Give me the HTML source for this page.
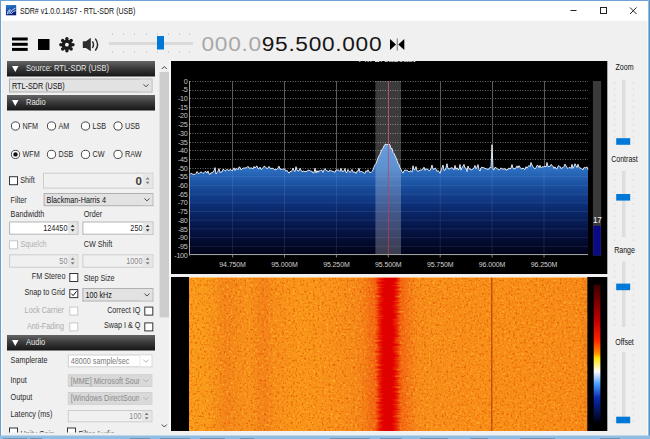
<!DOCTYPE html>
<html><head><meta charset="utf-8"><title>SDR#</title>
<style>html,body{margin:0;padding:0;width:650px;height:439px;overflow:hidden;background:#f0f0f0;font-family:"Liberation Sans", sans-serif;} svg{display:block}</style>
</head><body>
<svg width="650" height="439" viewBox="0 0 650 439" font-family='"Liberation Sans", sans-serif'><rect x="0" y="0" width="650" height="439" fill="#f0f0f0"/>
<rect x="0" y="0" width="650" height="20.8" fill="#ffffff"/>
<defs><linearGradient id="ig" x1="0" y1="0" x2="0.3" y2="1"><stop offset="0" stop-color="#2c86d8"/><stop offset="1" stop-color="#0a1f78"/></linearGradient></defs>
<rect x="5.9" y="5" width="10.3" height="10.3" fill="url(#ig)"/>
<path d="M7.3 14 Q7.8 9.8 10.2 9.6 Q10.4 12.2 7.6 13.8 M9.6 14 Q12 8.6 15.6 8.2 M11.2 13.8 Q13.6 10.8 15.6 10.6" stroke="#d8e6ff" stroke-width="0.9" fill="none"/>
<text transform="translate(20 13.7) scale(0.83 1)" font-size="8.5" fill="#111" letter-spacing="0" text-anchor="start" font-weight="normal" >SDR# v1.0.0.1457 - RTL-SDR (USB)</text>
<rect x="570.5" y="10" width="6" height="1" fill="#222"/>
<rect x="600.5" y="7.5" width="6" height="6" fill="none" stroke="#222" stroke-width="1"/>
<path d="M630 7.5 L636.5 14 M636.5 7.5 L630 14" stroke="#222" stroke-width="1"/>
<rect x="12" y="37.5" width="15.7" height="3" fill="#000"/>
<rect x="12" y="42.8" width="15.7" height="3" fill="#000"/>
<rect x="12" y="47.9" width="15.7" height="3" fill="#000"/>
<rect x="38" y="39" width="11.5" height="11" fill="#000"/>
<circle cx="72.90" cy="44.70" r="1.75" fill="#1a1a1a"/><circle cx="71.14" cy="48.94" r="1.75" fill="#1a1a1a"/><circle cx="66.90" cy="50.70" r="1.75" fill="#1a1a1a"/><circle cx="62.66" cy="48.94" r="1.75" fill="#1a1a1a"/><circle cx="60.90" cy="44.70" r="1.75" fill="#1a1a1a"/><circle cx="62.66" cy="40.46" r="1.75" fill="#1a1a1a"/><circle cx="66.90" cy="38.70" r="1.75" fill="#1a1a1a"/><circle cx="71.14" cy="40.46" r="1.75" fill="#1a1a1a"/>
<circle cx="66.9" cy="44.7" r="5.3" fill="#1a1a1a"/><circle cx="66.9" cy="44.7" r="1.9" fill="#f4f4f4"/>
<path d="M82.8 41.2 H86 L90.8 37.8 V51.2 L86 47.9 H82.8 Z" fill="#2e2e2e"/>
<path d="M92.4 41.3 Q94.6 44.6 92.4 47.9" stroke="#2e2e2e" stroke-width="1.5" fill="none"/>
<path d="M95.3 38.6 Q99.8 44.6 95.3 50.6" stroke="#2e2e2e" stroke-width="1.5" fill="none"/>
<rect x="109" y="42" width="84" height="3" fill="#dadada"/>
<rect x="112" y="33.5" width="1" height="1.5" fill="#c8c8c8"/><rect x="112" y="51.5" width="1" height="1.5" fill="#c8c8c8"/>
<rect x="123" y="33.5" width="1" height="1.5" fill="#c8c8c8"/><rect x="123" y="51.5" width="1" height="1.5" fill="#c8c8c8"/>
<rect x="134" y="33.5" width="1" height="1.5" fill="#c8c8c8"/><rect x="134" y="51.5" width="1" height="1.5" fill="#c8c8c8"/>
<rect x="146" y="33.5" width="1" height="1.5" fill="#c8c8c8"/><rect x="146" y="51.5" width="1" height="1.5" fill="#c8c8c8"/>
<rect x="157" y="33.5" width="1" height="1.5" fill="#c8c8c8"/><rect x="157" y="51.5" width="1" height="1.5" fill="#c8c8c8"/>
<rect x="168" y="33.5" width="1" height="1.5" fill="#c8c8c8"/><rect x="168" y="51.5" width="1" height="1.5" fill="#c8c8c8"/>
<rect x="179" y="33.5" width="1" height="1.5" fill="#c8c8c8"/><rect x="179" y="51.5" width="1" height="1.5" fill="#c8c8c8"/>
<rect x="189" y="33.5" width="1" height="1.5" fill="#c8c8c8"/><rect x="189" y="51.5" width="1" height="1.5" fill="#c8c8c8"/>
<rect x="157" y="36" width="7" height="13.5" fill="#0078d7"/>
<text transform="translate(201.5 50.8) scale(1.16 1)" x="0" y="0" font-size="19.6" letter-spacing="0.58" fill="#a8a8a8">000.0<tspan fill="#161616">95.500.000</tspan></text>
<path d="M390 39 L396 44.5 L390 50 Z M404.3 39 L398.3 44.5 L404.3 50 Z" fill="#000"/>
<rect x="396.8" y="38.5" width="0.8" height="12" fill="#555"/>
<defs><linearGradient id="hg" x1="0" y1="0" x2="0" y2="1"><stop offset="0" stop-color="#646464"/><stop offset="0.45" stop-color="#3c3c3c"/><stop offset="1" stop-color="#161616"/></linearGradient></defs>
<rect x="7" y="61" width="148" height="15.5" fill="url(#hg)"/>
<path d="M12 66 H18.5 L15.25 72 Z" fill="#fff"/>
<text transform="translate(26 71.3) scale(0.81 1)" font-size="9.3" fill="#e6e6e6" letter-spacing="0" text-anchor="start" font-weight="normal" >Source: RTL-SDR (USB)</text>
<rect x="7" y="95" width="148" height="15.5" fill="url(#hg)"/>
<path d="M12 100 H18.5 L15.25 106 Z" fill="#fff"/>
<text transform="translate(26 105.3) scale(0.81 1)" font-size="9.3" fill="#e6e6e6" letter-spacing="0" text-anchor="start" font-weight="normal" >Radio</text>
<rect x="7" y="335" width="148" height="15.5" fill="url(#hg)"/>
<path d="M12 340 H18.5 L15.25 346 Z" fill="#fff"/>
<text transform="translate(26 345.3) scale(0.81 1)" font-size="9.3" fill="#e6e6e6" letter-spacing="0" text-anchor="start" font-weight="normal" >Audio</text>
<rect x="9.5" y="79.0" width="142.5" height="13" fill="#e2e2e2" stroke="#b0b0b0" stroke-width="1"/>
<text transform="translate(12 88.5) scale(0.85 1)" font-size="8.5" fill="#111" letter-spacing="0" text-anchor="start" font-weight="normal" >RTL-SDR (USB)</text>
<rect x="139.5" y="79.5" width="12" height="12" fill="#e2e2e2"/>
<path d="M143.5 84.3 L146.0 86.8 L148.5 84.3" stroke="#333" stroke-width="0.9" fill="none"/>
<circle cx="15.5" cy="126" r="4.1" fill="#fff" stroke="#333" stroke-width="0.9"/>
<text transform="translate(22.5 129) scale(0.85 1)" font-size="8.5" fill="#2a2a2a" letter-spacing="0" text-anchor="start" font-weight="normal" >NFM</text>
<circle cx="51.5" cy="126" r="4.1" fill="#fff" stroke="#333" stroke-width="0.9"/>
<text transform="translate(58.5 129) scale(0.85 1)" font-size="8.5" fill="#2a2a2a" letter-spacing="0" text-anchor="start" font-weight="normal" >AM</text>
<circle cx="85.5" cy="126" r="4.1" fill="#fff" stroke="#333" stroke-width="0.9"/>
<text transform="translate(92.5 129) scale(0.85 1)" font-size="8.5" fill="#2a2a2a" letter-spacing="0" text-anchor="start" font-weight="normal" >LSB</text>
<circle cx="118.0" cy="126" r="4.1" fill="#fff" stroke="#333" stroke-width="0.9"/>
<text transform="translate(125.0 129) scale(0.85 1)" font-size="8.5" fill="#2a2a2a" letter-spacing="0" text-anchor="start" font-weight="normal" >USB</text>
<circle cx="15.5" cy="154.4" r="4.1" fill="#fff" stroke="#333" stroke-width="0.9"/>
<circle cx="15.5" cy="154.4" r="2.2" fill="#111"/>
<text transform="translate(22.5 157.4) scale(0.85 1)" font-size="8.5" fill="#2a2a2a" letter-spacing="0" text-anchor="start" font-weight="normal" >WFM</text>
<circle cx="51.5" cy="154.4" r="4.1" fill="#fff" stroke="#333" stroke-width="0.9"/>
<text transform="translate(58.5 157.4) scale(0.85 1)" font-size="8.5" fill="#2a2a2a" letter-spacing="0" text-anchor="start" font-weight="normal" >DSB</text>
<circle cx="85.5" cy="154.4" r="4.1" fill="#fff" stroke="#333" stroke-width="0.9"/>
<text transform="translate(92.5 157.4) scale(0.85 1)" font-size="8.5" fill="#2a2a2a" letter-spacing="0" text-anchor="start" font-weight="normal" >CW</text>
<circle cx="118.0" cy="154.4" r="4.1" fill="#fff" stroke="#333" stroke-width="0.9"/>
<text transform="translate(125.0 157.4) scale(0.85 1)" font-size="8.5" fill="#2a2a2a" letter-spacing="0" text-anchor="start" font-weight="normal" >RAW</text>
<rect x="9.5" y="176.7" width="8" height="8" fill="#fff" stroke="#333" stroke-width="1"/>
<text transform="translate(20.3 183.1) scale(0.85 1)" font-size="8.5" fill="#2a2a2a" letter-spacing="0" text-anchor="start" font-weight="normal" >Shift</text>
<rect x="43.5" y="173.2" width="109.4" height="14.9" fill="#f0f0f0" stroke="#cccccc" stroke-width="1"/>
<rect x="142.9" y="173.7" width="9.5" height="13.9" fill="#e6e6e6"/>
<path d="M145.75 179.45 L147.65 177.24999999999997 L149.55 179.45 Z M145.75 181.84999999999997 L147.65 184.04999999999998 L149.55 181.84999999999997 Z" fill="#777"/>
<text transform="translate(142 184.74999999999997) scale(1.05 1)" font-size="11" fill="#3c3c3c" letter-spacing="0" text-anchor="end" font-weight="bold" >0</text>
<text transform="translate(10.6 203.2) scale(0.85 1)" font-size="8.5" fill="#2a2a2a" letter-spacing="0" text-anchor="start" font-weight="normal" >Filter</text>
<rect x="44.1" y="193.5" width="108.8" height="12.2" fill="#e2e2e2" stroke="#b0b0b0" stroke-width="1"/>
<text transform="translate(46.6 202.6) scale(0.85 1)" font-size="8.5" fill="#111" letter-spacing="0" text-anchor="start" font-weight="normal" >Blackman-Harris 4</text>
<rect x="140.4" y="194" width="12" height="11.2" fill="#e2e2e2"/>
<path d="M144.4 198.4 L146.9 200.9 L149.4 198.4" stroke="#333" stroke-width="0.9" fill="none"/>
<text transform="translate(10.6 217.4) scale(0.85 1)" font-size="8.5" fill="#2a2a2a" letter-spacing="0" text-anchor="start" font-weight="normal" >Bandwidth</text>
<text transform="translate(83.7 217.4) scale(0.85 1)" font-size="8.5" fill="#2a2a2a" letter-spacing="0" text-anchor="start" font-weight="normal" >Order</text>
<rect x="9.6" y="222.0" width="68.3" height="12.2" fill="#ffffff" stroke="#b4b4b4" stroke-width="1"/>
<rect x="67.89999999999999" y="222.5" width="9.5" height="11.2" fill="#e6e6e6"/>
<path d="M70.74999999999999 226.9 L72.64999999999999 224.7 L74.55 226.9 Z M70.74999999999999 229.29999999999998 L72.64999999999999 231.5 L74.55 229.29999999999998 Z" fill="#333"/>
<text transform="translate(67.39999999999999 231.29999999999998) scale(0.85 1)" font-size="8.5" fill="#1a1a1a" letter-spacing="0" text-anchor="end" font-weight="normal" >124450</text>
<rect x="82.9" y="222.0" width="70" height="12.2" fill="#ffffff" stroke="#b4b4b4" stroke-width="1"/>
<rect x="142.9" y="222.5" width="9.5" height="11.2" fill="#e6e6e6"/>
<path d="M145.75 226.9 L147.65 224.7 L149.55 226.9 Z M145.75 229.29999999999998 L147.65 231.5 L149.55 229.29999999999998 Z" fill="#333"/>
<text transform="translate(142.4 231.29999999999998) scale(0.85 1)" font-size="8.5" fill="#1a1a1a" letter-spacing="0" text-anchor="end" font-weight="normal" >250</text>
<rect x="9.5" y="240.8" width="8" height="8" fill="#fff" stroke="#c8c8c8" stroke-width="1"/>
<text transform="translate(20.5 247.4) scale(0.85 1)" font-size="8.5" fill="#b0b0b0" letter-spacing="0" text-anchor="start" font-weight="normal" >Squelch</text>
<text transform="translate(83.7 247.4) scale(0.85 1)" font-size="8.5" fill="#2a2a2a" letter-spacing="0" text-anchor="start" font-weight="normal" >CW Shift</text>
<rect x="9.6" y="254.8" width="68.3" height="12.4" fill="#f0f0f0" stroke="#cccccc" stroke-width="1"/>
<rect x="67.89999999999999" y="255.3" width="9.5" height="11.4" fill="#e6e6e6"/>
<path d="M70.74999999999999 259.8 L72.64999999999999 257.6 L74.55 259.8 Z M70.74999999999999 262.2 L72.64999999999999 264.4 L74.55 262.2 Z" fill="#777"/>
<text transform="translate(67.39999999999999 264.2) scale(0.85 1)" font-size="8.5" fill="#8a8a8a" letter-spacing="0" text-anchor="end" font-weight="normal" >50</text>
<rect x="82.9" y="254.8" width="70" height="12.4" fill="#f0f0f0" stroke="#cccccc" stroke-width="1"/>
<rect x="142.9" y="255.3" width="9.5" height="11.4" fill="#e6e6e6"/>
<path d="M145.75 259.8 L147.65 257.6 L149.55 259.8 Z M145.75 262.2 L147.65 264.4 L149.55 262.2 Z" fill="#777"/>
<text transform="translate(142.4 264.2) scale(0.85 1)" font-size="8.5" fill="#8a8a8a" letter-spacing="0" text-anchor="end" font-weight="normal" >1000</text>
<text transform="translate(65.4 279) scale(0.85 1)" font-size="8.5" fill="#2a2a2a" letter-spacing="0" text-anchor="end" font-weight="normal" >FM Stereo</text>
<rect x="69.8" y="273.5" width="8" height="8" fill="#fff" stroke="#333" stroke-width="1"/>
<text transform="translate(83.7 280.9) scale(0.85 1)" font-size="8.5" fill="#2a2a2a" letter-spacing="0" text-anchor="start" font-weight="normal" >Step Size</text>
<text transform="translate(64.9 295.4) scale(0.85 1)" font-size="8.5" fill="#2a2a2a" letter-spacing="0" text-anchor="end" font-weight="normal" >Snap to Grid</text>
<rect x="69.8" y="289.6" width="8" height="8" fill="#fff" stroke="#333" stroke-width="1"/>
<path d="M71.3 293.6 L73.1 295.6 L76.5 291.3" stroke="#111" stroke-width="1" fill="none"/>
<rect x="82.9" y="288.5" width="70" height="12.5" fill="#e2e2e2" stroke="#b0b0b0" stroke-width="1"/>
<text transform="translate(85.4 297.75) scale(0.85 1)" font-size="8.5" fill="#111" letter-spacing="0" text-anchor="start" font-weight="normal" >100 kHz</text>
<rect x="140.4" y="289" width="12" height="11.5" fill="#e2e2e2"/>
<path d="M144.4 293.55 L146.9 296.05 L149.4 293.55" stroke="#333" stroke-width="0.9" fill="none"/>
<text transform="translate(63.9 313.4) scale(0.85 1)" font-size="8.5" fill="#aaaaaa" letter-spacing="0" text-anchor="end" font-weight="normal" >Lock Carrier</text>
<rect x="69.8" y="307.1" width="8" height="8" fill="#fff" stroke="#c8c8c8" stroke-width="1"/>
<text transform="translate(140.4 312.9) scale(0.85 1)" font-size="8.5" fill="#2a2a2a" letter-spacing="0" text-anchor="end" font-weight="normal" >Correct IQ</text>
<rect x="144.8" y="307.1" width="8" height="8" fill="#fff" stroke="#333" stroke-width="1"/>
<text transform="translate(63.9 329) scale(0.85 1)" font-size="8.5" fill="#aaaaaa" letter-spacing="0" text-anchor="end" font-weight="normal" >Anti-Fading</text>
<rect x="69.8" y="322.9" width="8" height="8" fill="#fff" stroke="#c8c8c8" stroke-width="1"/>
<text transform="translate(140.4 328.3) scale(0.85 1)" font-size="8.5" fill="#2a2a2a" letter-spacing="0" text-anchor="end" font-weight="normal" >Swap I &amp; Q</text>
<rect x="144.8" y="322.9" width="8" height="8" fill="#fff" stroke="#333" stroke-width="1"/>
<text transform="translate(10.6 363) scale(0.85 1)" font-size="8.5" fill="#2a2a2a" letter-spacing="0" text-anchor="start" font-weight="normal" >Samplerate</text>
<rect x="68.3" y="355.0" width="83.6" height="11.8" fill="#ffffff" stroke="#d0d0d0" stroke-width="1"/>
<text transform="translate(70.8 363.9) scale(0.85 1)" font-size="8.5" fill="#7a7a7a" letter-spacing="0" text-anchor="start" font-weight="normal" >48000 sample/sec</text>
<rect x="139.39999999999998" y="355.5" width="12" height="10.8" fill="#ffffff"/>
<path d="M143.39999999999998 359.7 L145.89999999999998 362.2 L148.39999999999998 359.7" stroke="#aaa" stroke-width="0.9" fill="none"/>
<rect x="139.5" y="355.5" width="0.8" height="11" fill="#e4e4e4"/>
<text transform="translate(10.6 383) scale(0.85 1)" font-size="8.5" fill="#2a2a2a" letter-spacing="0" text-anchor="start" font-weight="normal" >Input</text>
<rect x="68.3" y="374.7" width="83.6" height="11.8" fill="#d9d9d9" stroke="#d0d0d0" stroke-width="1"/>
<text transform="translate(70.8 383.59999999999997) scale(0.85 1)" font-size="8.5" fill="#8a8a8a" letter-spacing="0" text-anchor="start" font-weight="normal" >[MME] Microsoft Soun</text>
<rect x="139.39999999999998" y="375.2" width="12" height="10.8" fill="#d9d9d9"/>
<path d="M143.39999999999998 379.4 L145.89999999999998 381.9 L148.39999999999998 379.4" stroke="#aaa" stroke-width="0.9" fill="none"/>
<text transform="translate(10.6 400.4) scale(0.85 1)" font-size="8.5" fill="#2a2a2a" letter-spacing="0" text-anchor="start" font-weight="normal" >Output</text>
<rect x="68.3" y="392.5" width="83.6" height="11.8" fill="#d9d9d9" stroke="#d0d0d0" stroke-width="1"/>
<text transform="translate(70.8 401.4) scale(0.85 1)" font-size="8.5" fill="#8a8a8a" letter-spacing="0" text-anchor="start" font-weight="normal" >[Windows DirectSoun</text>
<rect x="139.39999999999998" y="393" width="12" height="10.8" fill="#d9d9d9"/>
<path d="M143.39999999999998 397.2 L145.89999999999998 399.7 L148.39999999999998 397.2" stroke="#aaa" stroke-width="0.9" fill="none"/>
<text transform="translate(10.6 416.6) scale(0.85 1)" font-size="8.5" fill="#2a2a2a" letter-spacing="0" text-anchor="start" font-weight="normal" >Latency (ms)</text>
<rect x="68.3" y="410.5" width="83.6" height="11.3" fill="#f0f0f0" stroke="#cccccc" stroke-width="1"/>
<rect x="141.89999999999998" y="411" width="9.5" height="10.3" fill="#e6e6e6"/>
<path d="M144.74999999999997 414.95 L146.64999999999998 412.75 L148.54999999999998 414.95 Z M144.74999999999997 417.34999999999997 L146.64999999999998 419.54999999999995 L148.54999999999998 417.34999999999997 Z" fill="#777"/>
<text transform="translate(141.39999999999998 419.34999999999997) scale(0.85 1)" font-size="8.5" fill="#8a8a8a" letter-spacing="0" text-anchor="end" font-weight="normal" >100</text>
<rect x="9.5" y="428" width="8" height="8" fill="#fff" stroke="#333" stroke-width="1"/>
<text transform="translate(20.5 436.5) scale(0.85 1)" font-size="8.5" fill="#2a2a2a" letter-spacing="0" text-anchor="start" font-weight="normal" >Unity Gain</text>
<rect x="67.5" y="428" width="8" height="8" fill="#fff" stroke="#333" stroke-width="1"/>
<text transform="translate(78.5 436.5) scale(0.85 1)" font-size="8.5" fill="#2a2a2a" letter-spacing="0" text-anchor="start" font-weight="normal" >Filter Audio</text>
<rect x="1" y="432.5" width="169" height="4" fill="#f0f0f0"/>
<rect x="159.5" y="61" width="9.5" height="375" fill="#f0f0f0"/>
<rect x="159.5" y="72" width="9.5" height="245.4" fill="#cdcdcd"/>
<path d="M161.8 69 L164.3 66.5 L166.8 69" stroke="#444" stroke-width="1" fill="none"/>
<path d="M161.8 424.5 L164.3 427 L166.8 424.5" stroke="#444" stroke-width="1" fill="none"/>
<rect x="169.2" y="61" width="1.8" height="370" fill="#fafafa"/>
<rect x="171" y="61" width="436.29999999999995" height="213" fill="#000"/>
<defs><clipPath id="sclip"><rect x="171" y="61" width="436.3" height="213"/></clipPath></defs>
<g clip-path="url(#sclip)"><text transform="translate(358.6 62.1) scale(0.96 1)" font-size="9.5" fill="#e8e8e8">FM Broadcast</text></g>
<defs><linearGradient id="sg" gradientUnits="userSpaceOnUse" x1="0" y1="143" x2="0" y2="255"><stop offset="0.0000" stop-color="#3a80d2"/><stop offset="0.2232" stop-color="#2e70c2"/><stop offset="0.3750" stop-color="#1a50a0"/><stop offset="0.5536" stop-color="#0c2f78"/><stop offset="0.7321" stop-color="#06184e"/><stop offset="0.9107" stop-color="#02082a"/><stop offset="1.0000" stop-color="#010318"/></linearGradient></defs>
<line x1="190" y1="81.5" x2="588" y2="81.5" stroke="#6a6a6a" stroke-width="1" stroke-dasharray="1 1.5"/><line x1="190" y1="90.5" x2="588" y2="90.5" stroke="#6a6a6a" stroke-width="1" stroke-dasharray="1 1.5"/><line x1="190" y1="98.5" x2="588" y2="98.5" stroke="#6a6a6a" stroke-width="1" stroke-dasharray="1 1.5"/><line x1="190" y1="107.5" x2="588" y2="107.5" stroke="#6a6a6a" stroke-width="1" stroke-dasharray="1 1.5"/><line x1="190" y1="116.5" x2="588" y2="116.5" stroke="#6a6a6a" stroke-width="1" stroke-dasharray="1 1.5"/><line x1="190" y1="124.5" x2="588" y2="124.5" stroke="#6a6a6a" stroke-width="1" stroke-dasharray="1 1.5"/><line x1="190" y1="133.5" x2="588" y2="133.5" stroke="#6a6a6a" stroke-width="1" stroke-dasharray="1 1.5"/><line x1="190" y1="142.5" x2="588" y2="142.5" stroke="#6a6a6a" stroke-width="1" stroke-dasharray="1 1.5"/><line x1="190" y1="150.5" x2="588" y2="150.5" stroke="#6a6a6a" stroke-width="1" stroke-dasharray="1 1.5"/><line x1="190" y1="159.5" x2="588" y2="159.5" stroke="#6a6a6a" stroke-width="1" stroke-dasharray="1 1.5"/><line x1="190" y1="168.5" x2="588" y2="168.5" stroke="#6a6a6a" stroke-width="1" stroke-dasharray="1 1.5"/><line x1="190" y1="177.5" x2="588" y2="177.5" stroke="#6a6a6a" stroke-width="1" stroke-dasharray="1 1.5"/><line x1="190" y1="185.5" x2="588" y2="185.5" stroke="#6a6a6a" stroke-width="1" stroke-dasharray="1 1.5"/><line x1="190" y1="194.5" x2="588" y2="194.5" stroke="#6a6a6a" stroke-width="1" stroke-dasharray="1 1.5"/><line x1="190" y1="203.5" x2="588" y2="203.5" stroke="#6a6a6a" stroke-width="1" stroke-dasharray="1 1.5"/><line x1="190" y1="211.5" x2="588" y2="211.5" stroke="#6a6a6a" stroke-width="1" stroke-dasharray="1 1.5"/><line x1="190" y1="220.5" x2="588" y2="220.5" stroke="#6a6a6a" stroke-width="1" stroke-dasharray="1 1.5"/><line x1="190" y1="229.5" x2="588" y2="229.5" stroke="#6a6a6a" stroke-width="1" stroke-dasharray="1 1.5"/><line x1="190" y1="237.5" x2="588" y2="237.5" stroke="#6a6a6a" stroke-width="1" stroke-dasharray="1 1.5"/><line x1="190" y1="246.5" x2="588" y2="246.5" stroke="#6a6a6a" stroke-width="1" stroke-dasharray="1 1.5"/><line x1="232.5" y1="81" x2="232.5" y2="255" stroke="#5a5a5a" stroke-width="1"/><line x1="284.5" y1="81" x2="284.5" y2="255" stroke="#5a5a5a" stroke-width="1"/><line x1="336.5" y1="81" x2="336.5" y2="255" stroke="#5a5a5a" stroke-width="1"/><line x1="388.5" y1="81" x2="388.5" y2="255" stroke="#5a5a5a" stroke-width="1"/><line x1="440.5" y1="81" x2="440.5" y2="255" stroke="#5a5a5a" stroke-width="1"/><line x1="492.5" y1="81" x2="492.5" y2="255" stroke="#5a5a5a" stroke-width="1"/><line x1="544.5" y1="81" x2="544.5" y2="255" stroke="#5a5a5a" stroke-width="1"/>
<polygon points="190,255 190.0,174.30 191.0,173.24 192.0,173.68 193.0,174.49 194.0,174.15 195.0,174.49 196.0,173.44 197.0,171.54 198.0,173.00 199.0,173.73 200.0,172.45 201.0,172.10 202.0,172.33 203.0,173.48 204.0,172.76 205.0,171.53 206.0,171.52 207.0,173.10 208.0,170.97 209.0,174.04 210.0,174.33 211.0,172.66 212.0,173.11 213.0,171.69 214.0,171.15 215.0,167.62 216.0,174.10 217.0,172.67 218.0,171.30 219.0,168.58 220.0,172.51 221.0,171.85 222.0,171.92 223.0,169.25 224.0,169.58 225.0,170.87 226.0,170.60 227.0,169.19 228.0,170.38 229.0,170.29 230.0,169.76 231.0,169.62 232.0,170.95 233.0,169.87 234.0,167.85 235.0,170.48 236.0,168.80 237.0,168.65 238.0,169.69 239.0,166.95 240.0,167.26 241.0,169.80 242.0,169.02 243.0,167.90 244.0,168.47 245.0,167.69 246.0,168.10 247.0,167.47 248.0,166.25 249.0,168.23 250.0,167.95 251.0,168.28 252.0,167.80 253.0,168.97 254.0,166.42 255.0,168.03 256.0,166.63 257.0,165.92 258.0,168.55 259.0,168.86 260.0,167.07 261.0,169.48 262.0,168.78 263.0,167.85 264.0,166.26 265.0,166.45 266.0,167.86 267.0,168.36 268.0,168.33 269.0,166.42 270.0,168.04 271.0,168.73 272.0,168.08 273.0,168.49 274.0,168.87 275.0,170.05 276.0,169.30 277.0,169.50 278.0,168.01 279.0,166.13 280.0,169.18 281.0,168.79 282.0,169.77 283.0,168.71 284.0,169.48 285.0,169.33 286.0,171.29 287.0,170.26 288.0,171.99 289.0,173.21 290.0,171.49 291.0,171.58 292.0,170.68 293.0,168.03 294.0,170.72 295.0,171.67 296.0,166.71 297.0,170.12 298.0,170.78 299.0,171.08 300.0,168.27 301.0,169.98 302.0,171.79 303.0,171.31 304.0,170.83 305.0,172.00 306.0,170.94 307.0,171.70 308.0,170.07 309.0,170.26 310.0,170.65 311.0,171.43 312.0,171.15 313.0,173.05 314.0,172.78 315.0,168.17 316.0,172.99 317.0,170.60 318.0,172.36 319.0,170.54 320.0,171.38 321.0,170.16 322.0,170.27 323.0,172.35 324.0,169.87 325.0,168.62 326.0,170.22 327.0,171.01 328.0,170.95 329.0,171.82 330.0,169.82 331.0,170.88 332.0,170.94 333.0,171.59 334.0,171.68 335.0,172.35 336.0,169.79 337.0,170.43 338.0,169.73 339.0,170.39 340.0,171.54 341.0,168.36 342.0,171.56 343.0,171.04 344.0,171.28 345.0,168.43 346.0,172.56 347.0,172.35 348.0,169.44 349.0,171.14 350.0,172.46 351.0,171.09 352.0,169.43 353.0,172.24 354.0,171.96 355.0,172.01 356.0,173.46 357.0,171.15 358.0,171.11 359.0,168.29 360.0,172.25 361.0,171.26 362.0,171.96 363.0,171.93 364.0,172.90 365.0,173.42 366.0,170.67 367.0,171.82 368.0,169.77 369.0,171.77 370.0,172.38 371.0,172.65 372.0,171.45 373.0,169.95 374.0,166.91 375.0,164.75 376.0,163.45 377.0,161.08 378.0,158.11 379.0,155.91 380.0,154.37 381.0,151.54 382.0,149.41 383.0,148.55 384.0,145.93 385.0,144.31 386.0,144.31 387.0,144.98 388.0,144.15 389.0,144.14 390.0,144.95 391.0,148.76 392.0,148.35 393.0,152.46 394.0,153.54 395.0,155.57 396.0,157.87 397.0,160.48 398.0,163.34 399.0,164.58 400.0,167.46 401.0,169.29 402.0,171.71 403.0,173.13 404.0,170.66 405.0,170.00 406.0,170.38 407.0,170.15 408.0,171.02 409.0,172.05 410.0,170.77 411.0,171.14 412.0,172.15 413.0,165.75 414.0,169.78 415.0,169.44 416.0,166.60 417.0,170.89 418.0,171.11 419.0,171.08 420.0,169.80 421.0,170.44 422.0,169.50 423.0,169.06 424.0,167.16 425.0,170.29 426.0,168.98 427.0,169.18 428.0,169.42 429.0,170.95 430.0,170.35 431.0,168.61 432.0,165.05 433.0,169.13 434.0,169.45 435.0,167.95 436.0,168.69 437.0,171.51 438.0,170.61 439.0,171.44 440.0,173.31 441.0,170.74 442.0,167.64 443.0,165.04 444.0,170.16 445.0,170.33 446.0,167.93 447.0,163.72 448.0,168.69 449.0,168.83 450.0,168.75 451.0,167.86 452.0,167.84 453.0,168.30 454.0,169.82 455.0,165.38 456.0,169.30 457.0,167.77 458.0,169.73 459.0,169.35 460.0,164.49 461.0,170.21 462.0,167.32 463.0,166.49 464.0,164.38 465.0,168.07 466.0,168.06 467.0,171.53 468.0,166.05 469.0,168.77 470.0,168.73 471.0,169.97 472.0,169.52 473.0,169.13 474.0,167.59 475.0,165.45 476.0,168.74 477.0,167.18 478.0,164.59 479.0,169.53 480.0,171.06 481.0,167.84 482.0,167.26 483.0,167.55 484.0,167.84 485.0,168.56 486.0,168.65 487.0,169.13 488.0,169.25 489.0,168.95 490.0,167.23 491.0,167.75 492.0,144.68 493.0,169.57 494.0,169.82 495.0,167.35 496.0,167.72 497.0,168.60 498.0,169.20 499.0,170.18 500.0,169.29 501.0,167.84 502.0,168.87 503.0,169.13 504.0,169.03 505.0,168.63 506.0,170.37 507.0,169.45 508.0,169.60 509.0,167.86 510.0,169.02 511.0,168.09 512.0,164.60 513.0,168.15 514.0,169.10 515.0,168.28 516.0,168.15 517.0,165.88 518.0,167.97 519.0,165.66 520.0,167.55 521.0,168.28 522.0,169.14 523.0,167.88 524.0,169.06 525.0,169.43 526.0,166.67 527.0,168.16 528.0,166.70 529.0,165.42 530.0,166.61 531.0,162.50 532.0,164.98 533.0,166.79 534.0,167.98 535.0,168.92 536.0,167.60 537.0,165.44 538.0,165.44 539.0,167.70 540.0,165.39 541.0,167.81 542.0,166.75 543.0,166.98 544.0,166.66 545.0,166.39 546.0,166.99 547.0,162.47 548.0,166.50 549.0,166.72 550.0,166.16 551.0,164.41 552.0,165.31 553.0,166.37 554.0,168.50 555.0,166.84 556.0,168.67 557.0,168.94 558.0,166.24 559.0,165.58 560.0,166.60 561.0,168.67 562.0,167.78 563.0,167.66 564.0,166.34 565.0,164.09 566.0,165.78 567.0,167.68 568.0,168.52 569.0,167.47 570.0,167.24 571.0,168.41 572.0,164.35 573.0,168.40 574.0,166.42 575.0,163.71 576.0,165.74 577.0,167.52 578.0,164.21 579.0,167.47 580.0,168.05 581.0,168.16 582.0,169.27 583.0,169.84 584.0,167.48 585.0,167.81 586.0,167.78 587.0,166.82 588.0,169.63 588,255" fill="url(#sg)"/>
<line x1="190" y1="176.70" x2="588" y2="176.70" stroke="#ffffff" stroke-opacity="0.08" stroke-width="1"/><line x1="190" y1="185.40" x2="588" y2="185.40" stroke="#ffffff" stroke-opacity="0.08" stroke-width="1"/><line x1="190" y1="194.10" x2="588" y2="194.10" stroke="#ffffff" stroke-opacity="0.08" stroke-width="1"/><line x1="190" y1="202.80" x2="588" y2="202.80" stroke="#ffffff" stroke-opacity="0.08" stroke-width="1"/><line x1="190" y1="211.50" x2="588" y2="211.50" stroke="#ffffff" stroke-opacity="0.08" stroke-width="1"/><line x1="190" y1="220.20" x2="588" y2="220.20" stroke="#ffffff" stroke-opacity="0.08" stroke-width="1"/><line x1="190" y1="228.90" x2="588" y2="228.90" stroke="#ffffff" stroke-opacity="0.08" stroke-width="1"/><line x1="190" y1="237.60" x2="588" y2="237.60" stroke="#ffffff" stroke-opacity="0.08" stroke-width="1"/><line x1="190" y1="246.30" x2="588" y2="246.30" stroke="#ffffff" stroke-opacity="0.08" stroke-width="1"/><line x1="190" y1="255.00" x2="588" y2="255.00" stroke="#ffffff" stroke-opacity="0.08" stroke-width="1"/><line x1="232.60" y1="170" x2="232.60" y2="255" stroke="#ffffff" stroke-opacity="0.12" stroke-width="0.8"/><line x1="284.50" y1="170" x2="284.50" y2="255" stroke="#ffffff" stroke-opacity="0.12" stroke-width="0.8"/><line x1="336.40" y1="170" x2="336.40" y2="255" stroke="#ffffff" stroke-opacity="0.12" stroke-width="0.8"/><line x1="440.20" y1="170" x2="440.20" y2="255" stroke="#ffffff" stroke-opacity="0.12" stroke-width="0.8"/><line x1="492.10" y1="170" x2="492.10" y2="255" stroke="#ffffff" stroke-opacity="0.12" stroke-width="0.8"/><line x1="544.00" y1="170" x2="544.00" y2="255" stroke="#ffffff" stroke-opacity="0.12" stroke-width="0.8"/>
<polyline points="190.0,174.30 191.0,173.24 192.0,173.68 193.0,174.49 194.0,174.15 195.0,174.49 196.0,173.44 197.0,171.54 198.0,173.00 199.0,173.73 200.0,172.45 201.0,172.10 202.0,172.33 203.0,173.48 204.0,172.76 205.0,171.53 206.0,171.52 207.0,173.10 208.0,170.97 209.0,174.04 210.0,174.33 211.0,172.66 212.0,173.11 213.0,171.69 214.0,171.15 215.0,167.62 216.0,174.10 217.0,172.67 218.0,171.30 219.0,168.58 220.0,172.51 221.0,171.85 222.0,171.92 223.0,169.25 224.0,169.58 225.0,170.87 226.0,170.60 227.0,169.19 228.0,170.38 229.0,170.29 230.0,169.76 231.0,169.62 232.0,170.95 233.0,169.87 234.0,167.85 235.0,170.48 236.0,168.80 237.0,168.65 238.0,169.69 239.0,166.95 240.0,167.26 241.0,169.80 242.0,169.02 243.0,167.90 244.0,168.47 245.0,167.69 246.0,168.10 247.0,167.47 248.0,166.25 249.0,168.23 250.0,167.95 251.0,168.28 252.0,167.80 253.0,168.97 254.0,166.42 255.0,168.03 256.0,166.63 257.0,165.92 258.0,168.55 259.0,168.86 260.0,167.07 261.0,169.48 262.0,168.78 263.0,167.85 264.0,166.26 265.0,166.45 266.0,167.86 267.0,168.36 268.0,168.33 269.0,166.42 270.0,168.04 271.0,168.73 272.0,168.08 273.0,168.49 274.0,168.87 275.0,170.05 276.0,169.30 277.0,169.50 278.0,168.01 279.0,166.13 280.0,169.18 281.0,168.79 282.0,169.77 283.0,168.71 284.0,169.48 285.0,169.33 286.0,171.29 287.0,170.26 288.0,171.99 289.0,173.21 290.0,171.49 291.0,171.58 292.0,170.68 293.0,168.03 294.0,170.72 295.0,171.67 296.0,166.71 297.0,170.12 298.0,170.78 299.0,171.08 300.0,168.27 301.0,169.98 302.0,171.79 303.0,171.31 304.0,170.83 305.0,172.00 306.0,170.94 307.0,171.70 308.0,170.07 309.0,170.26 310.0,170.65 311.0,171.43 312.0,171.15 313.0,173.05 314.0,172.78 315.0,168.17 316.0,172.99 317.0,170.60 318.0,172.36 319.0,170.54 320.0,171.38 321.0,170.16 322.0,170.27 323.0,172.35 324.0,169.87 325.0,168.62 326.0,170.22 327.0,171.01 328.0,170.95 329.0,171.82 330.0,169.82 331.0,170.88 332.0,170.94 333.0,171.59 334.0,171.68 335.0,172.35 336.0,169.79 337.0,170.43 338.0,169.73 339.0,170.39 340.0,171.54 341.0,168.36 342.0,171.56 343.0,171.04 344.0,171.28 345.0,168.43 346.0,172.56 347.0,172.35 348.0,169.44 349.0,171.14 350.0,172.46 351.0,171.09 352.0,169.43 353.0,172.24 354.0,171.96 355.0,172.01 356.0,173.46 357.0,171.15 358.0,171.11 359.0,168.29 360.0,172.25 361.0,171.26 362.0,171.96 363.0,171.93 364.0,172.90 365.0,173.42 366.0,170.67 367.0,171.82 368.0,169.77 369.0,171.77 370.0,172.38 371.0,172.65 372.0,171.45 373.0,169.95 374.0,166.91 375.0,164.75 376.0,163.45 377.0,161.08 378.0,158.11 379.0,155.91 380.0,154.37 381.0,151.54 382.0,149.41 383.0,148.55 384.0,145.93 385.0,144.31 386.0,144.31 387.0,144.98 388.0,144.15 389.0,144.14 390.0,144.95 391.0,148.76 392.0,148.35 393.0,152.46 394.0,153.54 395.0,155.57 396.0,157.87 397.0,160.48 398.0,163.34 399.0,164.58 400.0,167.46 401.0,169.29 402.0,171.71 403.0,173.13 404.0,170.66 405.0,170.00 406.0,170.38 407.0,170.15 408.0,171.02 409.0,172.05 410.0,170.77 411.0,171.14 412.0,172.15 413.0,165.75 414.0,169.78 415.0,169.44 416.0,166.60 417.0,170.89 418.0,171.11 419.0,171.08 420.0,169.80 421.0,170.44 422.0,169.50 423.0,169.06 424.0,167.16 425.0,170.29 426.0,168.98 427.0,169.18 428.0,169.42 429.0,170.95 430.0,170.35 431.0,168.61 432.0,165.05 433.0,169.13 434.0,169.45 435.0,167.95 436.0,168.69 437.0,171.51 438.0,170.61 439.0,171.44 440.0,173.31 441.0,170.74 442.0,167.64 443.0,165.04 444.0,170.16 445.0,170.33 446.0,167.93 447.0,163.72 448.0,168.69 449.0,168.83 450.0,168.75 451.0,167.86 452.0,167.84 453.0,168.30 454.0,169.82 455.0,165.38 456.0,169.30 457.0,167.77 458.0,169.73 459.0,169.35 460.0,164.49 461.0,170.21 462.0,167.32 463.0,166.49 464.0,164.38 465.0,168.07 466.0,168.06 467.0,171.53 468.0,166.05 469.0,168.77 470.0,168.73 471.0,169.97 472.0,169.52 473.0,169.13 474.0,167.59 475.0,165.45 476.0,168.74 477.0,167.18 478.0,164.59 479.0,169.53 480.0,171.06 481.0,167.84 482.0,167.26 483.0,167.55 484.0,167.84 485.0,168.56 486.0,168.65 487.0,169.13 488.0,169.25 489.0,168.95 490.0,167.23 491.0,167.75 492.0,144.68 493.0,169.57 494.0,169.82 495.0,167.35 496.0,167.72 497.0,168.60 498.0,169.20 499.0,170.18 500.0,169.29 501.0,167.84 502.0,168.87 503.0,169.13 504.0,169.03 505.0,168.63 506.0,170.37 507.0,169.45 508.0,169.60 509.0,167.86 510.0,169.02 511.0,168.09 512.0,164.60 513.0,168.15 514.0,169.10 515.0,168.28 516.0,168.15 517.0,165.88 518.0,167.97 519.0,165.66 520.0,167.55 521.0,168.28 522.0,169.14 523.0,167.88 524.0,169.06 525.0,169.43 526.0,166.67 527.0,168.16 528.0,166.70 529.0,165.42 530.0,166.61 531.0,162.50 532.0,164.98 533.0,166.79 534.0,167.98 535.0,168.92 536.0,167.60 537.0,165.44 538.0,165.44 539.0,167.70 540.0,165.39 541.0,167.81 542.0,166.75 543.0,166.98 544.0,166.66 545.0,166.39 546.0,166.99 547.0,162.47 548.0,166.50 549.0,166.72 550.0,166.16 551.0,164.41 552.0,165.31 553.0,166.37 554.0,168.50 555.0,166.84 556.0,168.67 557.0,168.94 558.0,166.24 559.0,165.58 560.0,166.60 561.0,168.67 562.0,167.78 563.0,167.66 564.0,166.34 565.0,164.09 566.0,165.78 567.0,167.68 568.0,168.52 569.0,167.47 570.0,167.24 571.0,168.41 572.0,164.35 573.0,168.40 574.0,166.42 575.0,163.71 576.0,165.74 577.0,167.52 578.0,164.21 579.0,167.47 580.0,168.05 581.0,168.16 582.0,169.27 583.0,169.84 584.0,167.48 585.0,167.81 586.0,167.78 587.0,166.82 588.0,169.63" fill="none" stroke="#f2f6fc" stroke-width="0.9" stroke-linejoin="round"/>
<rect x="375.4" y="81" width="25.6" height="174" fill="#ffffff" fill-opacity="0.23"/>
<rect x="387.9" y="81" width="0.9" height="174" fill="#d03a50" opacity="0.75"/>
<line x1="189.5" y1="81" x2="189.5" y2="255.5" stroke="#a0a0a0" stroke-width="1"/>
<line x1="189.5" y1="254.5" x2="588" y2="254.5" stroke="#a0a0a0" stroke-width="1"/>
<text x="187.5" y="83.60" font-size="7.2" fill="#c8c8c8" text-anchor="end" letter-spacing="-0.3">0</text><text x="187.5" y="92.30" font-size="7.2" fill="#c8c8c8" text-anchor="end" letter-spacing="-0.3">-5</text><text x="187.5" y="101.00" font-size="7.2" fill="#c8c8c8" text-anchor="end" letter-spacing="-0.3">-10</text><text x="187.5" y="109.70" font-size="7.2" fill="#c8c8c8" text-anchor="end" letter-spacing="-0.3">-15</text><text x="187.5" y="118.40" font-size="7.2" fill="#c8c8c8" text-anchor="end" letter-spacing="-0.3">-20</text><text x="187.5" y="127.10" font-size="7.2" fill="#c8c8c8" text-anchor="end" letter-spacing="-0.3">-25</text><text x="187.5" y="135.80" font-size="7.2" fill="#c8c8c8" text-anchor="end" letter-spacing="-0.3">-30</text><text x="187.5" y="144.50" font-size="7.2" fill="#c8c8c8" text-anchor="end" letter-spacing="-0.3">-35</text><text x="187.5" y="153.20" font-size="7.2" fill="#c8c8c8" text-anchor="end" letter-spacing="-0.3">-40</text><text x="187.5" y="161.90" font-size="7.2" fill="#c8c8c8" text-anchor="end" letter-spacing="-0.3">-45</text><text x="187.5" y="170.60" font-size="7.2" fill="#c8c8c8" text-anchor="end" letter-spacing="-0.3">-50</text><text x="187.5" y="179.30" font-size="7.2" fill="#c8c8c8" text-anchor="end" letter-spacing="-0.3">-55</text><text x="187.5" y="188.00" font-size="7.2" fill="#c8c8c8" text-anchor="end" letter-spacing="-0.3">-60</text><text x="187.5" y="196.70" font-size="7.2" fill="#c8c8c8" text-anchor="end" letter-spacing="-0.3">-65</text><text x="187.5" y="205.40" font-size="7.2" fill="#c8c8c8" text-anchor="end" letter-spacing="-0.3">-70</text><text x="187.5" y="214.10" font-size="7.2" fill="#c8c8c8" text-anchor="end" letter-spacing="-0.3">-75</text><text x="187.5" y="222.80" font-size="7.2" fill="#c8c8c8" text-anchor="end" letter-spacing="-0.3">-80</text><text x="187.5" y="231.50" font-size="7.2" fill="#c8c8c8" text-anchor="end" letter-spacing="-0.3">-85</text><text x="187.5" y="240.20" font-size="7.2" fill="#c8c8c8" text-anchor="end" letter-spacing="-0.3">-90</text><text x="187.5" y="248.90" font-size="7.2" fill="#c8c8c8" text-anchor="end" letter-spacing="-0.3">-95</text><text x="187.5" y="257.60" font-size="7.2" fill="#c8c8c8" text-anchor="end" letter-spacing="-0.3">-100</text><text x="232.60" y="267.2" font-size="7" fill="#d0d0d0" text-anchor="middle" letter-spacing="-0.1">94.750M</text><line x1="232.60" y1="255" x2="232.60" y2="257.5" stroke="#9a9a9a" stroke-width="0.8"/><text x="284.50" y="267.2" font-size="7" fill="#d0d0d0" text-anchor="middle" letter-spacing="-0.1">95.000M</text><line x1="284.50" y1="255" x2="284.50" y2="257.5" stroke="#9a9a9a" stroke-width="0.8"/><text x="336.40" y="267.2" font-size="7" fill="#d0d0d0" text-anchor="middle" letter-spacing="-0.1">95.250M</text><line x1="336.40" y1="255" x2="336.40" y2="257.5" stroke="#9a9a9a" stroke-width="0.8"/><text x="388.30" y="267.2" font-size="7" fill="#d0d0d0" text-anchor="middle" letter-spacing="-0.1">95.500M</text><line x1="388.30" y1="255" x2="388.30" y2="257.5" stroke="#9a9a9a" stroke-width="0.8"/><text x="440.20" y="267.2" font-size="7" fill="#d0d0d0" text-anchor="middle" letter-spacing="-0.1">95.750M</text><line x1="440.20" y1="255" x2="440.20" y2="257.5" stroke="#9a9a9a" stroke-width="0.8"/><text x="492.10" y="267.2" font-size="7" fill="#d0d0d0" text-anchor="middle" letter-spacing="-0.1">96.000M</text><line x1="492.10" y1="255" x2="492.10" y2="257.5" stroke="#9a9a9a" stroke-width="0.8"/><text x="544.00" y="267.2" font-size="7" fill="#d0d0d0" text-anchor="middle" letter-spacing="-0.1">96.250M</text><line x1="544.00" y1="255" x2="544.00" y2="257.5" stroke="#9a9a9a" stroke-width="0.8"/>
<rect x="592.9" y="81" width="8.2" height="174.5" fill="#3a3a3a"/>
<rect x="593.3" y="225.8" width="7.4" height="29.7" fill="#0a0a88"/>
<text x="597.2" y="223" font-size="8.2" fill="#f4f4f4" text-anchor="middle" letter-spacing="-0.3">17</text>
<rect x="171" y="277" width="436.29999999999995" height="154" fill="#000"/>
<defs><linearGradient id="wg" gradientUnits="userSpaceOnUse" x1="170" y1="0" x2="610" y2="0"><stop offset="0.0000" stop-color="#f99c1a"/><stop offset="0.0795" stop-color="#f99a1a"/><stop offset="0.1045" stop-color="#f6901a"/><stop offset="0.1273" stop-color="#f3841a"/><stop offset="0.1545" stop-color="#f58c1a"/><stop offset="0.1818" stop-color="#f7921a"/><stop offset="0.2000" stop-color="#f4861a"/><stop offset="0.2182" stop-color="#f3821a"/><stop offset="0.2364" stop-color="#f78e1a"/><stop offset="0.2955" stop-color="#f9961a"/><stop offset="0.3750" stop-color="#f8901a"/><stop offset="0.4091" stop-color="#f68a1a"/><stop offset="0.4455" stop-color="#f5841a"/><stop offset="0.4614" stop-color="#f47818"/><stop offset="0.5295" stop-color="#f47818"/><stop offset="0.5432" stop-color="#f6861a"/><stop offset="0.5909" stop-color="#f88e1a"/><stop offset="0.7273" stop-color="#f88e18"/><stop offset="0.8409" stop-color="#f88c18"/><stop offset="0.9273" stop-color="#f78a18"/><stop offset="0.9545" stop-color="#f0801a"/><stop offset="1.0000" stop-color="#f0801a"/></linearGradient><linearGradient id="rg" gradientUnits="userSpaceOnUse" x1="360" y1="0" x2="416" y2="0"><stop offset="0.0000" stop-color="#e80000" stop-opacity="0"/><stop offset="0.2679" stop-color="#f03000" stop-opacity="0.2"/><stop offset="0.3393" stop-color="#e81000" stop-opacity="0.8"/><stop offset="0.4107" stop-color="#e00000" stop-opacity="1"/><stop offset="0.5893" stop-color="#e00000" stop-opacity="1"/><stop offset="0.6607" stop-color="#e81000" stop-opacity="0.8"/><stop offset="0.7321" stop-color="#f03000" stop-opacity="0.2"/><stop offset="1.0000" stop-color="#e80000" stop-opacity="0"/></linearGradient><clipPath id="wclip"><rect x="189" y="277" width="398.3" height="154"/></clipPath><filter id="disp" x="-20%" y="0" width="140%" height="100%" color-interpolation-filters="sRGB"><feTurbulence type="fractalNoise" baseFrequency="0.05 0.45" numOctaves="2" seed="5" result="t"/><feColorMatrix in="t" type="matrix" values="1 0 0 0 0  0 0 0 0 0.5  0 0 0 0 0  0 0 0 0 1" result="t2"/><feDisplacementMap in="SourceGraphic" in2="t2" scale="9" xChannelSelector="R" yChannelSelector="G"/></filter><filter id="nzY" x="0" y="0" width="100%" height="100%" color-interpolation-filters="sRGB"><feTurbulence type="fractalNoise" baseFrequency="0.45" numOctaves="2" seed="3"/><feColorMatrix type="matrix" values="0 0 0 0 1  0 0 0 0 0.70  0 0 0 0 0.14  3.2 0 0 0 -1.72"/></filter><filter id="nzD" x="0" y="0" width="100%" height="100%" color-interpolation-filters="sRGB"><feTurbulence type="fractalNoise" baseFrequency="0.45" numOctaves="2" seed="17"/><feColorMatrix type="matrix" values="0 0 0 0 0.90  0 0 0 0 0.36  0 0 0 0 0.02  3.2 0 0 0 -1.72"/></filter><linearGradient id="cb" x1="0" y1="0" x2="0" y2="1"><stop offset="0" stop-color="#3a0000"/><stop offset="0.26" stop-color="#c00000"/><stop offset="0.40" stop-color="#ff2000"/><stop offset="0.50" stop-color="#ff9000"/><stop offset="0.53" stop-color="#ffe000"/><stop offset="0.63" stop-color="#ffffff"/><stop offset="0.72" stop-color="#4aa0ff"/><stop offset="0.82" stop-color="#0a2ab0"/><stop offset="1" stop-color="#000010"/></linearGradient></defs>
<g clip-path="url(#wclip)">
<rect x="170" y="277" width="440" height="154" fill="url(#wg)"/>
<rect x="189" y="277" width="398.3" height="154" filter="url(#nzY)"/>
<rect x="189" y="277" width="398.3" height="154" filter="url(#nzD)"/>
<rect x="355" y="277" width="66" height="154" fill="url(#rg)" filter="url(#disp)"/>
<rect x="491.3" y="277" width="1" height="154" fill="#a02800" opacity="0.85"/>
<rect x="189" y="277" width="398.3" height="1" fill="#ffe8c0" opacity="0.6"/>
</g>
<rect x="593.7" y="284.6" width="6.7" height="138" fill="url(#cb)"/>
<text transform="translate(624.5 69.8) scale(0.83 1)" font-size="8.5" fill="#111" letter-spacing="0" text-anchor="middle" font-weight="normal" >Zoom</text>
<rect x="622" y="79.6" width="3.5" height="64.4" fill="#dedede"/>
<rect x="614" y="82.3" width="1.2" height="1" fill="#d2d2d2"/><rect x="632.8" y="82.3" width="1.2" height="1" fill="#d2d2d2"/>
<rect x="614" y="88.3" width="1.2" height="1" fill="#d2d2d2"/><rect x="632.8" y="88.3" width="1.2" height="1" fill="#d2d2d2"/>
<rect x="614" y="94.3" width="1.2" height="1" fill="#d2d2d2"/><rect x="632.8" y="94.3" width="1.2" height="1" fill="#d2d2d2"/>
<rect x="614" y="100.3" width="1.2" height="1" fill="#d2d2d2"/><rect x="632.8" y="100.3" width="1.2" height="1" fill="#d2d2d2"/>
<rect x="614" y="106.3" width="1.2" height="1" fill="#d2d2d2"/><rect x="632.8" y="106.3" width="1.2" height="1" fill="#d2d2d2"/>
<rect x="614" y="112.3" width="1.2" height="1" fill="#d2d2d2"/><rect x="632.8" y="112.3" width="1.2" height="1" fill="#d2d2d2"/>
<rect x="614" y="118.3" width="1.2" height="1" fill="#d2d2d2"/><rect x="632.8" y="118.3" width="1.2" height="1" fill="#d2d2d2"/>
<rect x="614" y="124.3" width="1.2" height="1" fill="#d2d2d2"/><rect x="632.8" y="124.3" width="1.2" height="1" fill="#d2d2d2"/>
<rect x="614" y="130.3" width="1.2" height="1" fill="#d2d2d2"/><rect x="632.8" y="130.3" width="1.2" height="1" fill="#d2d2d2"/>
<rect x="614" y="136.3" width="1.2" height="1" fill="#d2d2d2"/><rect x="632.8" y="136.3" width="1.2" height="1" fill="#d2d2d2"/>
<rect x="614" y="142.3" width="1.2" height="1" fill="#d2d2d2"/><rect x="632.8" y="142.3" width="1.2" height="1" fill="#d2d2d2"/>
<rect x="616.2" y="138.2" width="14" height="6.6" fill="#0078d7"/>
<text transform="translate(624.5 161.5) scale(0.83 1)" font-size="8.5" fill="#111" letter-spacing="0" text-anchor="middle" font-weight="normal" >Contrast</text>
<rect x="622" y="171" width="3.5" height="66" fill="#dedede"/>
<rect x="614" y="173.7" width="1.2" height="1" fill="#d2d2d2"/><rect x="632.8" y="173.7" width="1.2" height="1" fill="#d2d2d2"/>
<rect x="614" y="179.7" width="1.2" height="1" fill="#d2d2d2"/><rect x="632.8" y="179.7" width="1.2" height="1" fill="#d2d2d2"/>
<rect x="614" y="185.7" width="1.2" height="1" fill="#d2d2d2"/><rect x="632.8" y="185.7" width="1.2" height="1" fill="#d2d2d2"/>
<rect x="614" y="191.7" width="1.2" height="1" fill="#d2d2d2"/><rect x="632.8" y="191.7" width="1.2" height="1" fill="#d2d2d2"/>
<rect x="614" y="197.7" width="1.2" height="1" fill="#d2d2d2"/><rect x="632.8" y="197.7" width="1.2" height="1" fill="#d2d2d2"/>
<rect x="614" y="203.7" width="1.2" height="1" fill="#d2d2d2"/><rect x="632.8" y="203.7" width="1.2" height="1" fill="#d2d2d2"/>
<rect x="614" y="209.7" width="1.2" height="1" fill="#d2d2d2"/><rect x="632.8" y="209.7" width="1.2" height="1" fill="#d2d2d2"/>
<rect x="614" y="215.7" width="1.2" height="1" fill="#d2d2d2"/><rect x="632.8" y="215.7" width="1.2" height="1" fill="#d2d2d2"/>
<rect x="614" y="221.7" width="1.2" height="1" fill="#d2d2d2"/><rect x="632.8" y="221.7" width="1.2" height="1" fill="#d2d2d2"/>
<rect x="614" y="227.7" width="1.2" height="1" fill="#d2d2d2"/><rect x="632.8" y="227.7" width="1.2" height="1" fill="#d2d2d2"/>
<rect x="614" y="233.7" width="1.2" height="1" fill="#d2d2d2"/><rect x="632.8" y="233.7" width="1.2" height="1" fill="#d2d2d2"/>
<rect x="614" y="239.7" width="1.2" height="1" fill="#d2d2d2"/><rect x="632.8" y="239.7" width="1.2" height="1" fill="#d2d2d2"/>
<rect x="616.2" y="194" width="14" height="6.6" fill="#0078d7"/>
<text transform="translate(624.5 253.4) scale(0.83 1)" font-size="8.5" fill="#111" letter-spacing="0" text-anchor="middle" font-weight="normal" >Range</text>
<rect x="622" y="261.8" width="3.5" height="65.19999999999999" fill="#dedede"/>
<rect x="614" y="264.5" width="1.2" height="1" fill="#d2d2d2"/><rect x="632.8" y="264.5" width="1.2" height="1" fill="#d2d2d2"/>
<rect x="614" y="270.5" width="1.2" height="1" fill="#d2d2d2"/><rect x="632.8" y="270.5" width="1.2" height="1" fill="#d2d2d2"/>
<rect x="614" y="276.5" width="1.2" height="1" fill="#d2d2d2"/><rect x="632.8" y="276.5" width="1.2" height="1" fill="#d2d2d2"/>
<rect x="614" y="282.5" width="1.2" height="1" fill="#d2d2d2"/><rect x="632.8" y="282.5" width="1.2" height="1" fill="#d2d2d2"/>
<rect x="614" y="288.5" width="1.2" height="1" fill="#d2d2d2"/><rect x="632.8" y="288.5" width="1.2" height="1" fill="#d2d2d2"/>
<rect x="614" y="294.5" width="1.2" height="1" fill="#d2d2d2"/><rect x="632.8" y="294.5" width="1.2" height="1" fill="#d2d2d2"/>
<rect x="614" y="300.5" width="1.2" height="1" fill="#d2d2d2"/><rect x="632.8" y="300.5" width="1.2" height="1" fill="#d2d2d2"/>
<rect x="614" y="306.5" width="1.2" height="1" fill="#d2d2d2"/><rect x="632.8" y="306.5" width="1.2" height="1" fill="#d2d2d2"/>
<rect x="614" y="312.5" width="1.2" height="1" fill="#d2d2d2"/><rect x="632.8" y="312.5" width="1.2" height="1" fill="#d2d2d2"/>
<rect x="614" y="318.5" width="1.2" height="1" fill="#d2d2d2"/><rect x="632.8" y="318.5" width="1.2" height="1" fill="#d2d2d2"/>
<rect x="614" y="324.5" width="1.2" height="1" fill="#d2d2d2"/><rect x="632.8" y="324.5" width="1.2" height="1" fill="#d2d2d2"/>
<rect x="616.2" y="283.6" width="14" height="6.6" fill="#0078d7"/>
<text transform="translate(624.5 344.7) scale(0.83 1)" font-size="8.5" fill="#111" letter-spacing="0" text-anchor="middle" font-weight="normal" >Offset</text>
<rect x="622" y="352" width="3.5" height="71" fill="#dedede"/>
<rect x="614" y="354.7" width="1.2" height="1" fill="#d2d2d2"/><rect x="632.8" y="354.7" width="1.2" height="1" fill="#d2d2d2"/>
<rect x="614" y="360.7" width="1.2" height="1" fill="#d2d2d2"/><rect x="632.8" y="360.7" width="1.2" height="1" fill="#d2d2d2"/>
<rect x="614" y="366.7" width="1.2" height="1" fill="#d2d2d2"/><rect x="632.8" y="366.7" width="1.2" height="1" fill="#d2d2d2"/>
<rect x="614" y="372.7" width="1.2" height="1" fill="#d2d2d2"/><rect x="632.8" y="372.7" width="1.2" height="1" fill="#d2d2d2"/>
<rect x="614" y="378.7" width="1.2" height="1" fill="#d2d2d2"/><rect x="632.8" y="378.7" width="1.2" height="1" fill="#d2d2d2"/>
<rect x="614" y="384.7" width="1.2" height="1" fill="#d2d2d2"/><rect x="632.8" y="384.7" width="1.2" height="1" fill="#d2d2d2"/>
<rect x="614" y="390.7" width="1.2" height="1" fill="#d2d2d2"/><rect x="632.8" y="390.7" width="1.2" height="1" fill="#d2d2d2"/>
<rect x="614" y="396.7" width="1.2" height="1" fill="#d2d2d2"/><rect x="632.8" y="396.7" width="1.2" height="1" fill="#d2d2d2"/>
<rect x="614" y="402.7" width="1.2" height="1" fill="#d2d2d2"/><rect x="632.8" y="402.7" width="1.2" height="1" fill="#d2d2d2"/>
<rect x="614" y="408.7" width="1.2" height="1" fill="#d2d2d2"/><rect x="632.8" y="408.7" width="1.2" height="1" fill="#d2d2d2"/>
<rect x="614" y="414.7" width="1.2" height="1" fill="#d2d2d2"/><rect x="632.8" y="414.7" width="1.2" height="1" fill="#d2d2d2"/>
<rect x="614" y="420.7" width="1.2" height="1" fill="#d2d2d2"/><rect x="632.8" y="420.7" width="1.2" height="1" fill="#d2d2d2"/>
<rect x="616.2" y="416.7" width="14" height="6.6" fill="#0078d7"/>
<rect x="0" y="0" width="650" height="1" fill="#6fa3d3"/>
<rect x="0" y="0" width="1" height="439" fill="#6e9ec6"/>
<rect x="1" y="21" width="1" height="414" fill="#f6fbff"/>
<rect x="647" y="20" width="1" height="416" fill="#fafafa"/>
<rect x="648" y="0" width="1" height="439" fill="#8cbde2"/>
<rect x="649" y="0" width="1" height="439" fill="#5590c6"/>
<rect x="0" y="435.5" width="650" height="3.5" fill="#8fbde4"/>
<g fill="#3a4a5a" opacity="0.35"><rect x="3" y="438" width="24" height="1"/><rect x="30" y="438" width="12" height="1"/><rect x="130" y="438" width="20" height="1"/><rect x="160" y="438" width="30" height="1"/><rect x="200" y="438" width="25" height="1"/><rect x="240" y="438" width="14" height="1"/><rect x="330" y="438" width="40" height="1"/><rect x="380" y="438" width="22" height="1"/><rect x="420" y="438" width="28" height="1"/><rect x="470" y="438" width="18" height="1"/><rect x="520" y="438" width="35" height="1"/><rect x="600" y="438" width="20" height="1"/></g></svg>
</body></html>
